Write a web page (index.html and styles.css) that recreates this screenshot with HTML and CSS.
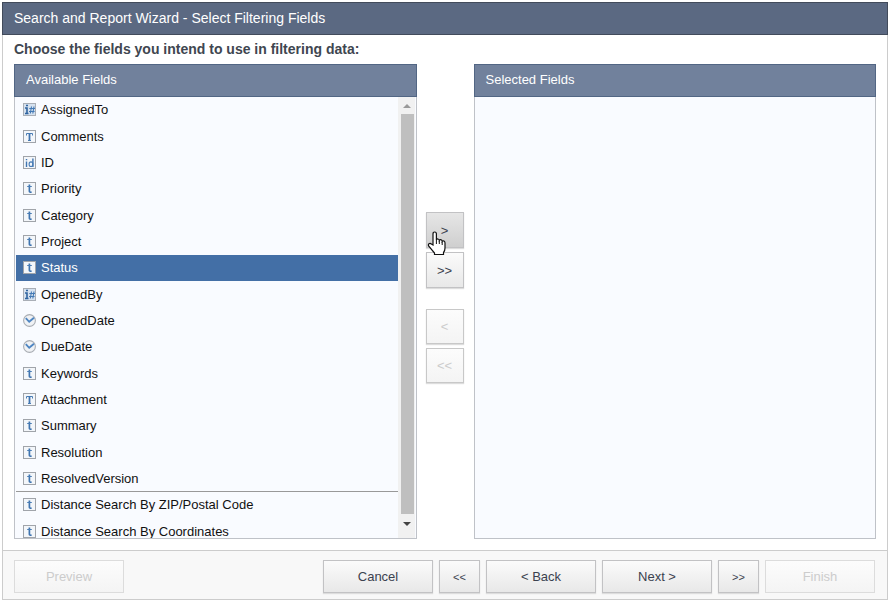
FILE: index.html
```html
<!DOCTYPE html>
<html lang="en">
<head>
  <meta charset="UTF-8">
  <title>Search and Report Wizard</title>
  <link rel="stylesheet" href="styles.css">
</head>
<body>
  <!-- field type icons -->
  <svg class="sprite" aria-hidden="true">
    <symbol id="icon-user" viewBox="0 0 13 13">
      <rect x="0.5" y="0.5" width="12" height="12" fill="#d5e1ef" stroke="#a9aeb6"/>
      <path d="M2 5H4V11M2 10.5H5.5M3 2.5H5" fill="none" stroke="#2f639f" stroke-width="1.6"/>
      <path d="M8.5 3.5L7.3 10.5M11 3.5L9.8 10.5M6.3 5.5H12M6 8.5H11.6" fill="none" stroke="#4379b5" stroke-width="1.1"/>
    </symbol>
    <symbol id="icon-memo" viewBox="0 0 13 13">
      <rect x="0.5" y="0.5" width="12" height="12" fill="#f3f6fa" stroke="#a0a4aa"/>
      <path d="M3.5 5.5V3.5H9.5V5.5M5 10.5H8" fill="none" stroke="#4a7db5"/>
      <path d="M6.5 3.5V10.5" fill="none" stroke="#3f74b0" stroke-width="1.8"/>
    </symbol>
    <symbol id="icon-id" viewBox="0 0 13 13">
      <rect x="0.5" y="0.5" width="12" height="12" fill="#f3f6fa" stroke="#a0a4aa"/>
      <path d="M3.5 5.5V11M3.5 3V4.2M9.9 2.5V11" fill="none" stroke="#3f74b0" stroke-width="1.4"/>
      <ellipse cx="8" cy="8.2" rx="1.9" ry="2.3" fill="none" stroke="#4a7db5" stroke-width="1.1"/>
    </symbol>
    <symbol id="icon-text" viewBox="0 0 13 13">
      <rect x="0.5" y="0.5" width="12" height="12" fill="#f3f6fa" stroke="#a0a4aa"/>
      <path d="M6.4 2.5V9.2Q6.4 10.5 8.6 10.2" fill="none" stroke="#3f74b0" stroke-width="1.7"/>
      <path d="M4.2 4.5H8.8" fill="none" stroke="#4a7db5"/>
    </symbol>
    <symbol id="icon-date" viewBox="0 0 13 13">
      <circle cx="6.5" cy="6.5" r="5.9" fill="#f0f2f5" stroke="#a9adb3" stroke-width="1.1"/>
      <path d="M2.8 4.2L6.2 7.8L11 3.8" fill="none" stroke="#4f86c2" stroke-width="1.9"/>
    </symbol>
  </svg>

  <main class="wizard">
    <h1 class="wizard-title">Search and Report Wizard - Select Filtering Fields</h1>

    <div class="wizard-body">
      <p class="hint">Choose the fields you intend to use in filtering data:</p>

      <div class="picker">
        <section class="panel">
          <h2 class="panel-title" id="available">Available Fields</h2>
          <div class="panel-body">
            <ul class="fields" role="listbox" aria-labelledby="available">
              <li class="field" role="option"><svg class="icon"><use href="#icon-user"/></svg>AssignedTo</li>
              <li class="field" role="option"><svg class="icon"><use href="#icon-memo"/></svg>Comments</li>
              <li class="field" role="option"><svg class="icon"><use href="#icon-id"/></svg>ID</li>
              <li class="field" role="option"><svg class="icon"><use href="#icon-text"/></svg>Priority</li>
              <li class="field" role="option"><svg class="icon"><use href="#icon-text"/></svg>Category</li>
              <li class="field" role="option"><svg class="icon"><use href="#icon-text"/></svg>Project</li>
              <li class="field selected" role="option" aria-selected="true"><svg class="icon"><use href="#icon-text"/></svg>Status</li>
              <li class="field" role="option"><svg class="icon"><use href="#icon-user"/></svg>OpenedBy</li>
              <li class="field" role="option"><svg class="icon"><use href="#icon-date"/></svg>OpenedDate</li>
              <li class="field" role="option"><svg class="icon"><use href="#icon-date"/></svg>DueDate</li>
              <li class="field" role="option"><svg class="icon"><use href="#icon-text"/></svg>Keywords</li>
              <li class="field" role="option"><svg class="icon"><use href="#icon-memo"/></svg>Attachment</li>
              <li class="field" role="option"><svg class="icon"><use href="#icon-text"/></svg>Summary</li>
              <li class="field" role="option"><svg class="icon"><use href="#icon-text"/></svg>Resolution</li>
              <li class="field last" role="option"><svg class="icon"><use href="#icon-text"/></svg>ResolvedVersion</li>
              <li class="field" role="option"><svg class="icon"><use href="#icon-text"/></svg>Distance Search By ZIP/Postal Code</li>
              <li class="field" role="option"><svg class="icon"><use href="#icon-text"/></svg>Distance Search By Coordinates</li>
            </ul>
            <div class="scrollbar">
              <button class="scroll-btn" aria-label="Scroll up"><svg width="8" height="4"><path d="M0 4L4 0L8 4Z" fill="#999"/></svg></button>
              <div class="thumb"></div>
              <button class="scroll-btn down" aria-label="Scroll down"><svg width="8" height="4"><path d="M0 0H8L4 4Z" fill="#444"/></svg></button>
            </div>
          </div>
        </section>

        <div class="moves">
          <div class="move-group">
            <button class="btn move hover" aria-label="Add field">&gt;
              <svg class="cursor" width="20" height="25" viewBox="0 0 20 25" aria-hidden="true">
                <path d="M6 14V3Q6 1 7.7 1T9.4 3V9Q9.8 7.8 11 8T12.3 9.5Q13 8.4 14.1 8.8T15.2 10.5Q16 9.5 17 10T18 12V17Q18 20 16.5 21.5V23.5H7.5V22L2 15.5Q.8 13.7 2 12.8T4.4 13.1Z" fill="#fff" stroke="#111" stroke-width="1.2"/>
                <path d="M9.4 9V13M12.3 10V13M15.2 11V14" stroke="#111" stroke-width="1"/>
              </svg>
            </button>
            <button class="btn move" aria-label="Add all fields">&gt;&gt;</button>
          </div>
          <div class="move-group">
            <button class="btn move" disabled aria-label="Remove field">&lt;</button>
            <button class="btn move" disabled aria-label="Remove all fields">&lt;&lt;</button>
          </div>
        </div>

        <section class="panel">
          <h2 class="panel-title" id="chosen">Selected Fields</h2>
          <div class="panel-body">
            <ul class="fields empty" role="listbox" aria-labelledby="chosen"></ul>
          </div>
        </section>
      </div>
    </div>

    <footer class="wizard-footer">
      <button class="btn preview" disabled>Preview</button>
      <button class="btn">Cancel</button>
      <button class="btn small">&lt;&lt;</button>
      <button class="btn">&lt; Back</button>
      <button class="btn">Next &gt;</button>
      <button class="btn small">&gt;&gt;</button>
      <button class="btn" disabled>Finish</button>
    </footer>
  </main>
</body>
</html>
```
FILE: styles.css
```css
* {
  margin: 0;
  padding: 0;
  box-sizing: border-box;
}

body {
  padding: 2px 3px 4px 2px;
  background: #fff;
  font-family: "Liberation Sans", Arial, sans-serif;
  font-size: 13px;
  color: #111;
}

.sprite {
  display: none;
}

.wizard {
  border: 1px solid #ccc;
  border-top: none;
}

.wizard-title {
  margin: 0 -1px;
  padding: 0 11px;
  border: 1px solid #424b5b;
  background: #5b6982;
  color: #fff;
  font-size: 14px;
  font-weight: normal;
  line-height: 31px;
}

.wizard-body {
  padding: 4px 11px 11px;
}

.hint {
  margin-bottom: 5px;
  color: #404650;
  font-size: 14px;
  font-weight: bold;
  line-height: 20px;
}

.picker {
  display: flex;
}

.panel {
  flex: 1;
  display: flex;
  flex-direction: column;
}

.panel-title {
  padding: 0 11px;
  border: 1px solid #526684;
  background: #71819c;
  color: #fff;
  font-size: 13px;
  font-weight: normal;
  line-height: 29px;
  height: 33px;
}

.panel-body {
  display: flex;
  height: 442px;
  padding: 0 1px;
  border: 1px solid #bfc2c8;
  border-top: none;
  background: #f9fbff;
  overflow: hidden;
}

/* 17 equal rows, the last one is cut off by the panel */
.fields {
  flex: 1;
  display: grid;
  grid-auto-rows: 1fr;
  height: 448px;
  list-style: none;
}

.field {
  display: flex;
  align-items: center;
  gap: 5px;
  padding-left: 7px;
  padding-bottom: 1px;
}

.field.selected {
  background: #436fa6;
  color: #fff;
}

.field.last {
  border-bottom: 1px solid #999;
  padding-bottom: 0;
}

.icon {
  width: 13px;
  height: 13px;
}

.scrollbar {
  display: flex;
  flex-direction: column;
  width: 17px;
  padding: 0 1px 0 3px;
  background: #f1f1f1;
}

.scroll-btn {
  height: 17px;
  border: none;
  background: none;
}

.scroll-btn.down {
  height: 24px;
  padding-bottom: 4px;
}

.scroll-btn svg {
  display: block;
  margin: 0 auto;
}

.thumb {
  flex: 1;
  background: #bfbfbf;
}

.moves {
  display: flex;
  flex-direction: column;
  gap: 21px;
  padding: 148px 10px 0 9px;
}

.move-group {
  display: flex;
  flex-direction: column;
  gap: 4px;
}

.btn {
  width: 110px;
  height: 33px;
  border: 1px solid #c2c2c4;
  background: linear-gradient(#fbfbfb, #e8e8e8);
  box-shadow: 0 1px 1px #ddd;
  color: #3b424f;
  font-family: inherit;
  font-size: 13px;
  cursor: pointer;
}

.btn.small {
  width: 41px;
  font-size: 11px;
}

.btn.move {
  position: relative;
  width: 38px;
  height: 36px;
}

.btn.hover {
  background: linear-gradient(#e6e6e6, #cfcfcf);
}

.btn:disabled {
  border-color: #dcdcdc;
  background: linear-gradient(#fcfcfc, #f4f4f4);
  box-shadow: none;
  color: #ccc;
  cursor: default;
}

.btn.move:disabled {
  height: 35px;
  border-color: #c8c8c8;
  box-shadow: 0 1px 1px #ddd;
}

.cursor {
  position: absolute;
  left: 0;
  top: 18px;
  z-index: 1;
}

.wizard-footer {
  display: flex;
  gap: 6px;
  padding: 9px 12px 6px 11px;
  border-top: 1px solid #ccc;
  background: #f8f8f8;
}

.btn.preview {
  margin-right: auto;
}
```
